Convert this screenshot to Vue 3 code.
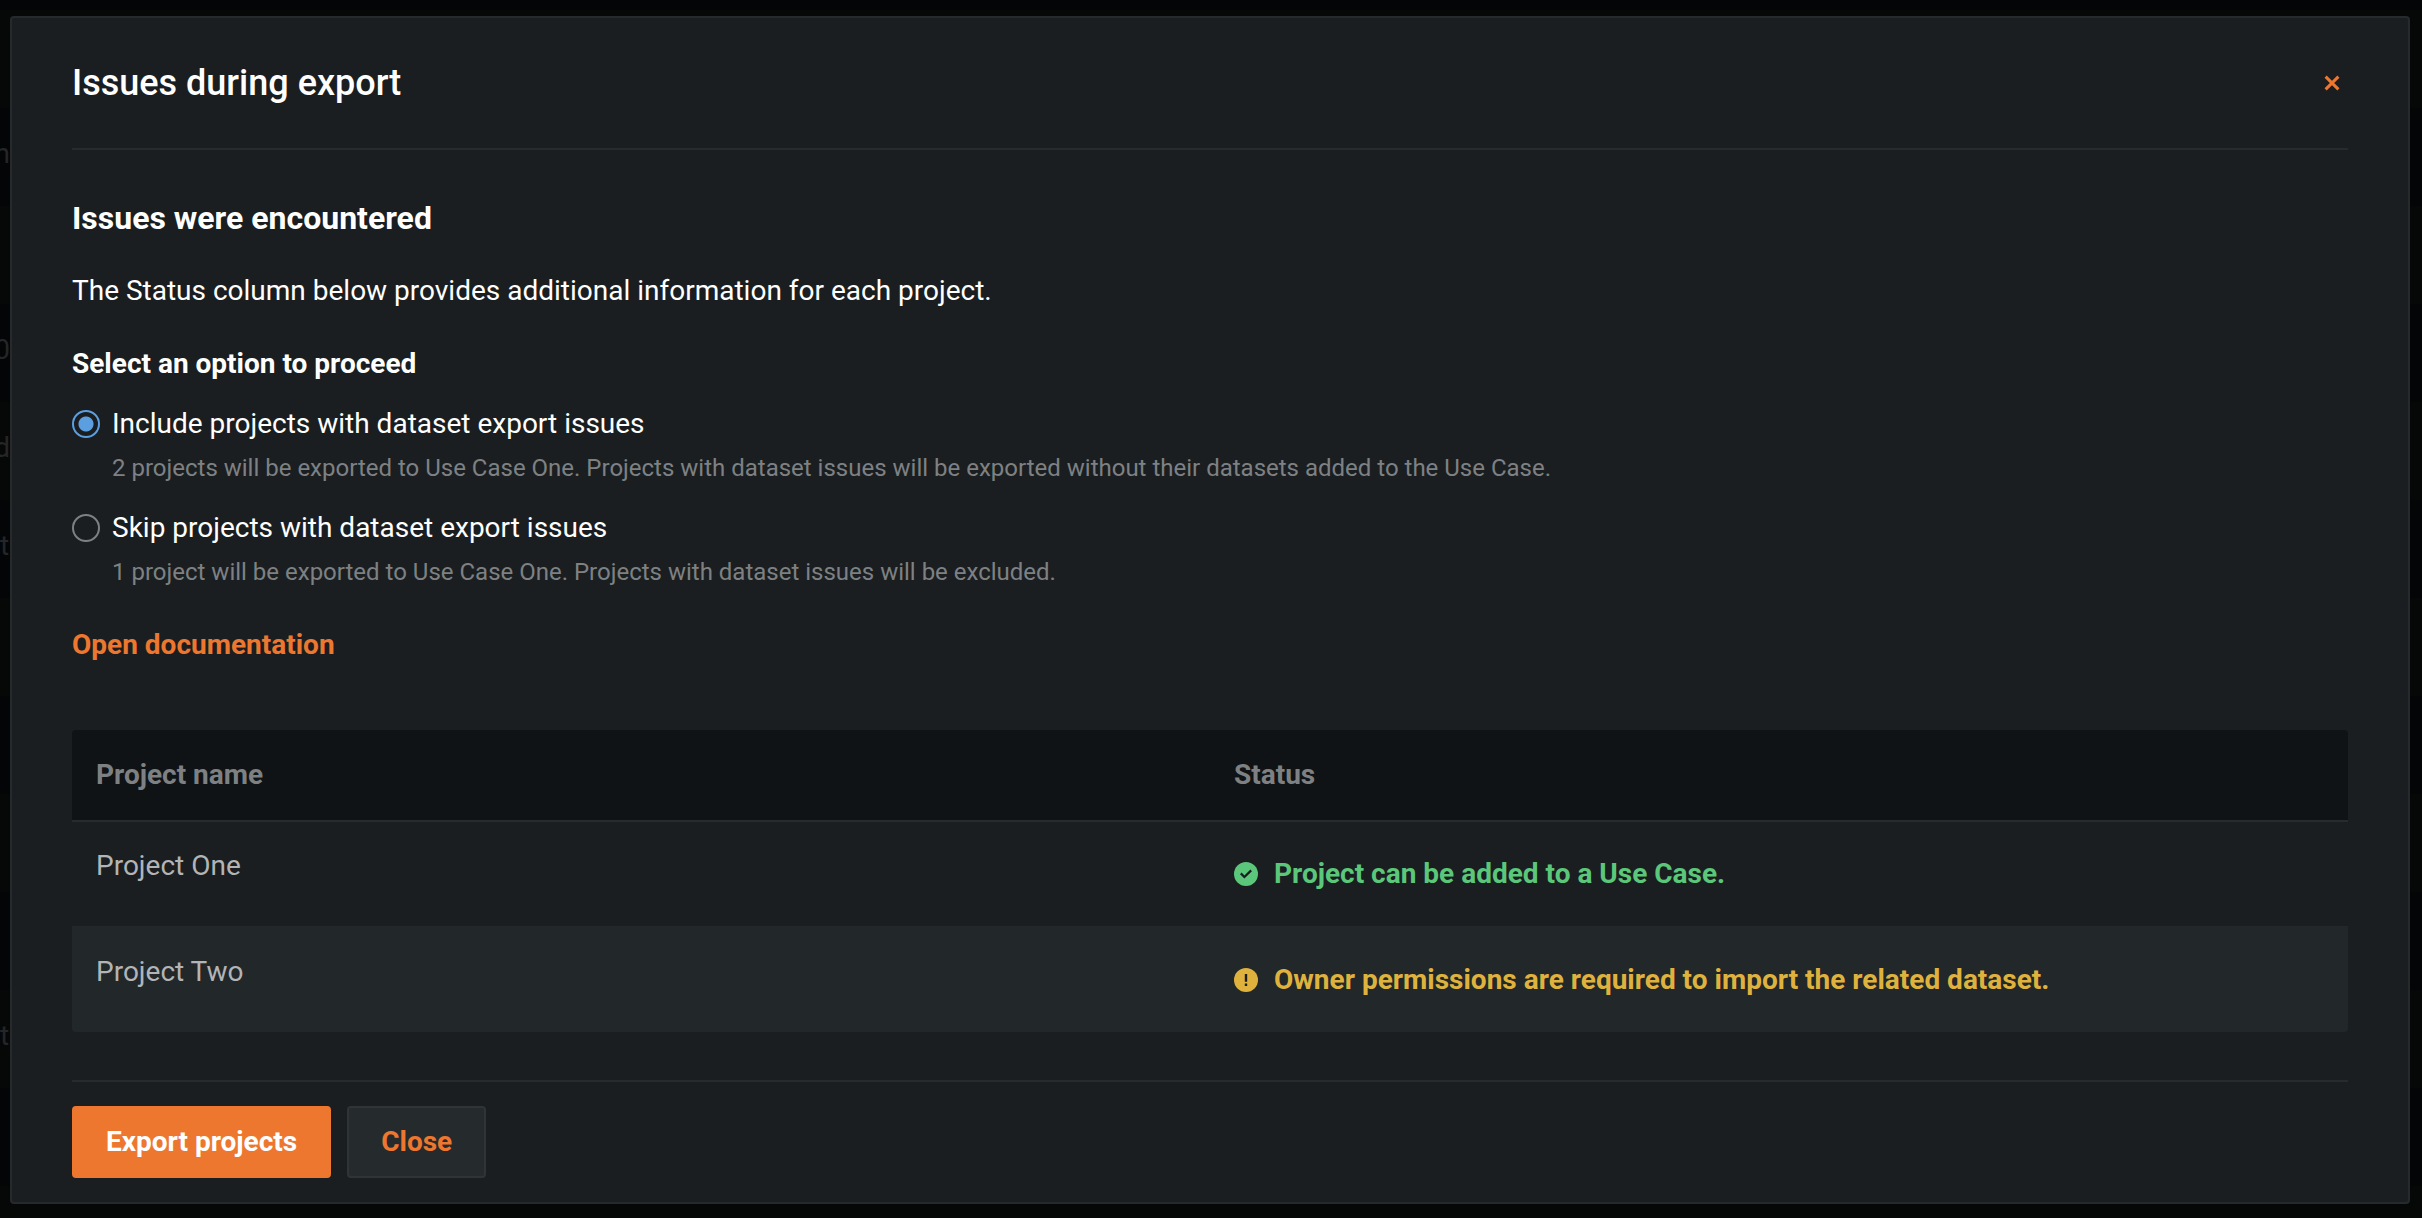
<script setup>
import { ref } from 'vue'

const choice = ref('include')

const options = [
  {
    value: 'include',
    label: 'Include projects with dataset export issues',
    hint: '2 projects will be exported to Use Case One. Projects with dataset issues will be exported without their datasets added to the Use Case.',
  },
  {
    value: 'skip',
    label: 'Skip projects with dataset export issues',
    hint: '1 project will be exported to Use Case One. Projects with dataset issues will be excluded.',
  },
]

const projects = [
  { name: 'Project One', kind: 'success', status: 'Project can be added to a Use Case.' },
  { name: 'Project Two', kind: 'warning', status: 'Owner permissions are required to import the related dataset.' },
]

const pageRows = ['', 'n', '', '0', 'd', 't)', '', '', '', '', 't)', '', '']
</script>

<template>
  <div class="page">
    <div class="backdrop" aria-hidden="true">
      <div v-for="(text, i) in pageRows" :key="i" class="backdrop-row">
        <span class="backdrop-cell" :class="{ start: text.length > 1 }">{{ text }}</span>
      </div>
    </div>

    <section class="modal" role="dialog" aria-labelledby="modal-title">
      <header class="modal-header">
        <h1 id="modal-title">Issues during export</h1>
        <button class="dismiss" type="button" aria-label="Dismiss">
          <svg width="16" height="16" viewBox="0 0 16 16" fill="none">
            <path d="M1.6 1.6L14.4 14.4M14.4 1.6L1.6 14.4" stroke="currentColor" stroke-width="3" />
          </svg>
        </button>
      </header>

      <div class="modal-body">
        <h2>Issues were encountered</h2>
        <p class="intro">The Status column below provides additional information for each project.</p>

        <fieldset class="options">
          <legend>Select an option to proceed</legend>
          <div v-for="option in options" :key="option.value" class="option">
            <input
              :id="option.value"
              v-model="choice"
              type="radio"
              name="export-option"
              :value="option.value"
              :aria-describedby="option.value + '-hint'"
            />
            <div class="option-text">
              <label :for="option.value">{{ option.label }}</label>
              <p :id="option.value + '-hint'" class="hint">{{ option.hint }}</p>
            </div>
          </div>
        </fieldset>

        <a class="docs" href="#">Open documentation</a>

        <table class="projects">
          <thead>
            <tr>
              <th scope="col">Project name</th>
              <th scope="col">Status</th>
            </tr>
          </thead>
          <tbody>
            <tr v-for="project in projects" :key="project.name">
              <td class="name">{{ project.name }}</td>
              <td>
                <div class="status" :class="project.kind">
                  <svg width="24" height="24" viewBox="0 0 24 24" aria-hidden="true">
                    <circle cx="12" cy="12" r="12" fill="currentColor" />
                    <path
                      v-if="project.kind === 'success'"
                      class="mark"
                      d="M6.8 11.4L10.4 15L17.2 8.4"
                      fill="none"
                      stroke-width="2.2"
                    />
                    <path
                      v-else
                      class="mark"
                      d="M12 6V13.8M12 15.6V18"
                      fill="none"
                      stroke-width="2.4"
                    />
                  </svg>
                  <span>{{ project.status }}</span>
                </div>
              </td>
            </tr>
          </tbody>
        </table>
      </div>

      <footer class="modal-footer">
        <button class="btn primary" type="button">Export projects</button>
        <button class="btn secondary" type="button">Close</button>
      </footer>
    </section>
  </div>
</template>

<style>
body {
  margin: 0;
  background: #030507;
}
</style>

<style scoped>
.page {
  position: relative;
  box-sizing: border-box;
  min-height: 100vh;
  padding: 16px 12px 14px 10px;
  overflow: hidden;
  background: #030507;
  color: #fff;
  font-family: Roboto, "Liberation Sans", sans-serif;
  font-size: 28px;
  line-height: 40px;
}

.backdrop {
  position: absolute;
  inset: 10px 0 0;
  overflow: hidden;
}

.backdrop-row {
  display: flex;
  box-sizing: border-box;
  height: 98px;
  padding-top: 26px;
  color: #242628;
}

.backdrop-row:nth-child(odd) {
  background: #060807;
}

.backdrop-cell {
  display: flex;
  justify-content: flex-end;
  width: 10px;
}

.backdrop-cell.start {
  justify-content: flex-start;
}

.modal {
  position: relative;
  padding: 0 60px;
  border: 2px solid #262a2d;
  border-radius: 4px;
  background: #1a1e20;
}

.modal-header {
  display: flex;
  align-items: center;
  justify-content: space-between;
  padding: 43px 0;
  border-bottom: 2px solid #282b2e;
}

h1,
h2,
p {
  margin: 0;
}

h1 {
  font-size: 36px;
  font-weight: 500;
  line-height: 44px;
}

.dismiss {
  display: flex;
  align-items: center;
  justify-content: center;
  width: 32px;
  height: 32px;
  padding: 0;
  border: 0;
  background: none;
  color: #ed772f;
}

.modal-body {
  padding: 48px 0;
}

h2 {
  font-size: 32px;
  font-weight: 700;
  line-height: 40px;
}

.intro {
  margin-top: 33px;
}

.options {
  min-width: 0;
  margin: 33px 0 0;
  padding: 0;
  border: 0;
}

legend {
  padding: 0;
  font-weight: 700;
}

.option {
  display: flex;
  gap: 12px;
  margin-top: 20px;
}

.option + .option {
  margin-top: 22px;
}

.option input {
  appearance: none;
  flex: none;
  box-sizing: border-box;
  width: 28px;
  height: 28px;
  margin: 6px 0;
  border: 2px solid #7e8183;
  border-radius: 50%;
}

.option input:checked {
  border-color: #5c9fe0;
  background: radial-gradient(circle, #5c9fe0 0 6px, #5c9fe0 7px, transparent 8px);
}

.option label {
  display: block;
}

.hint {
  margin-top: 6px;
  color: #7e8183;
  font-size: 24px;
  line-height: 36px;
}

.docs {
  display: block;
  width: fit-content;
  margin-top: 35px;
  color: #ed772f;
  font-weight: 700;
  text-decoration: none;
}

.projects {
  width: 100%;
  margin-top: 65px;
  border-spacing: 0;
  border-radius: 4px;
  overflow: hidden;
  table-layout: fixed;
}

th {
  padding: 25px 24px;
  background: #0f1315;
  color: #7e8183;
  font-weight: 700;
  text-align: left;
}

td {
  padding: 32px 24px;
  border-top: 2px solid #282b2e;
}

tbody tr:nth-child(even) td {
  border-top-color: #22272a;
  background: #22272a;
}

.name {
  padding-top: 24px;
  color: #b2b4b6;
  vertical-align: top;
}

.status {
  display: flex;
  align-items: center;
  gap: 16px;
  font-weight: 700;
}

.status svg {
  flex: none;
}

.mark {
  stroke: #1a1e20;
}

.success {
  color: #5bc77a;
}

.warning {
  color: #dfb23d;
}

.modal-footer {
  display: flex;
  gap: 16px;
  padding: 24px 0;
  border-top: 2px solid #282b2e;
}

.btn {
  padding: 14px 32px;
  border: 2px solid;
  border-radius: 4px;
  font: inherit;
  font-weight: 700;
}

.primary {
  border-color: #ed772f;
  background: #ed772f;
  color: #fff;
}

.secondary {
  border-color: #313436;
  background: #252a2d;
  color: #ed772f;
}
</style>
